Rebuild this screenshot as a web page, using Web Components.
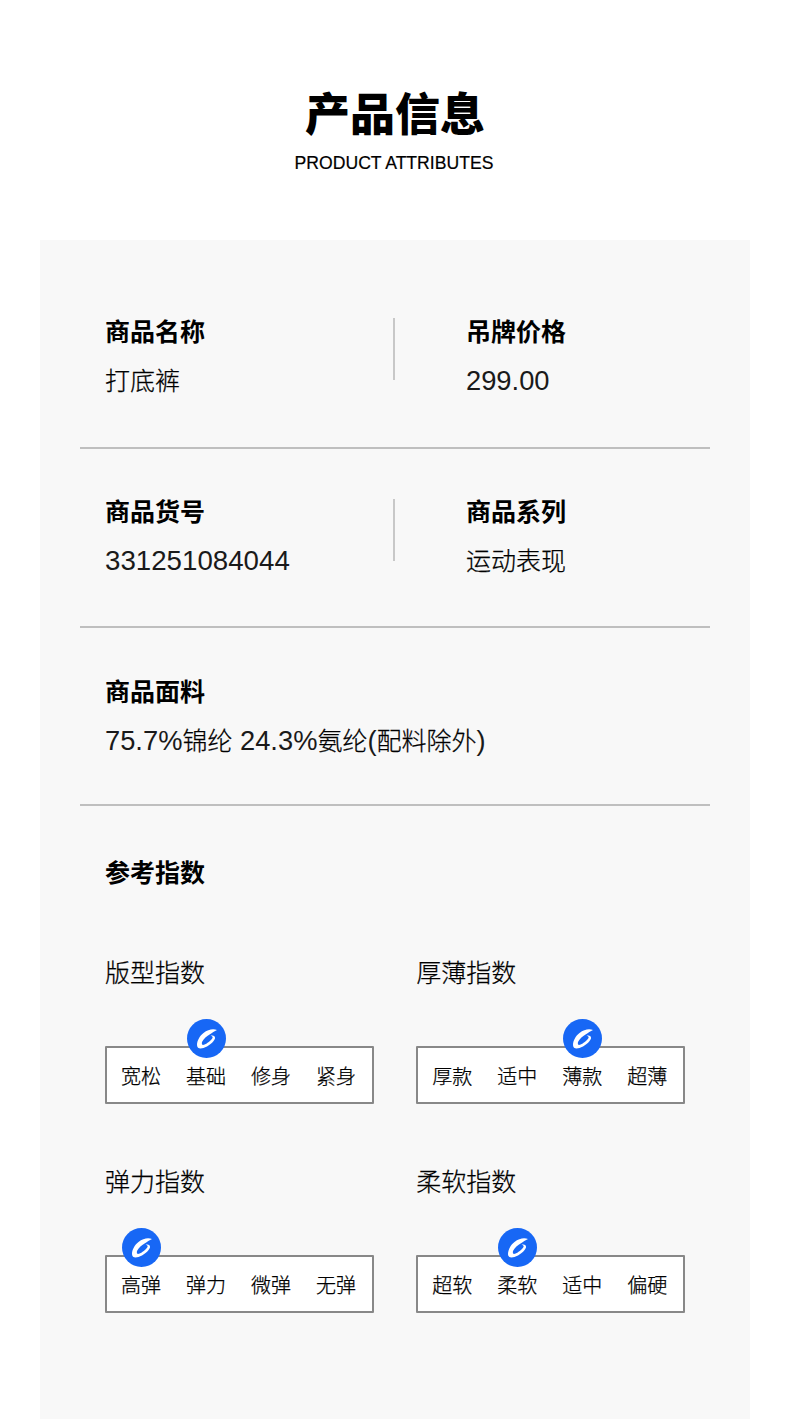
<!DOCTYPE html>
<html lang="zh">
<head>
<meta charset="utf-8">
<title>产品信息</title>
<style>
  html, body { margin: 0; padding: 0; background: #fff; }
  body {
    width: 790px;
    height: 1419px;
    overflow: hidden;
    font-family: "Liberation Sans", "Noto Sans CJK SC", sans-serif;
    color: #000;
  }
</style>
</head>
<body>
<product-attributes>
  <attr-row>
    <attr-item label="商品名称">打底裤</attr-item>
    <attr-item label="吊牌价格" side="right"><span class="latin mix">299.00</span></attr-item>
  </attr-row>
  <attr-row>
    <attr-item label="商品货号"><span class="latin">331251084044</span></attr-item>
    <attr-item label="商品系列" side="right">运动表现</attr-item>
  </attr-row>
  <attr-row>
    <attr-item label="商品面料"><span class="latin mix">75.7%</span>锦纶<span class="latin mix"> 24.3%</span>氨纶<span class="latin mix">(</span>配料除外<span class="latin mix">)</span></attr-item>
  </attr-row>
  <index-panel title="参考指数">
    <index-scale name="版型指数" options="宽松,基础,修身,紧身" active="1"></index-scale>
    <index-scale name="厚薄指数" options="厚款,适中,薄款,超薄" active="2"></index-scale>
    <index-scale name="弹力指数" options="高弹,弹力,微弹,无弹" active="0"></index-scale>
    <index-scale name="柔软指数" options="超软,柔软,适中,偏硬" active="1"></index-scale>
  </index-panel>
</product-attributes>

<script>
class ProductAttributes extends HTMLElement {
  constructor() {
    super();
    const shadow = this.attachShadow({ mode: 'open' });
    shadow.innerHTML = `
      <style>
        :host { display: block; }
        header { height: 240px; box-sizing: border-box; padding-top: 87px; text-align: center; }
        h1 { margin: 0; font-size: 45px; line-height: 58px; font-weight: 900; }
        p { margin: 0; font-size: 17.6px; line-height: 22px; padding-top: 7px; padding-right: 2px; -webkit-text-stroke: .2px #000; }
        .card { margin: 0 40px; height: 1179px; padding: 0 40px; background: #f8f8f8; box-sizing: border-box; }
      </style>
      <header><h1>产品信息</h1><p>PRODUCT ATTRIBUTES</p></header>
      <div class="card"><slot></slot></div>
    `;
  }
}

class AttrRow extends HTMLElement {
  constructor() {
    super();
    const shadow = this.attachShadow({ mode: 'open' });
    shadow.innerHTML = `
      <style>
        :host {
          --shift: -1px;
          display: flex;
          box-sizing: border-box;
          padding: 78px 25px 0;
          height: 209px;
          border-bottom: 2px solid #bfbfbf;
        }
        :host(:nth-of-type(2)) { --shift: -2px; padding-top: 50px; height: 179px; }
        :host(:nth-of-type(3)) { padding-top: 50px; height: 178px; }
      </style>
      <slot></slot>
    `;
  }
}

class AttrItem extends HTMLElement {
  constructor() {
    super();
    const shadow = this.attachShadow({ mode: 'open' });
    shadow.innerHTML = `
      <style>
        :host { display: block; width: 288px; height: 62px; font-size: 25px; line-height: 30px; font-weight: 300; white-space: nowrap; -webkit-text-stroke: .25px #000; }
        :host([side="right"]) { width: 290px; box-sizing: border-box; padding-left: 71px; border-left: 2px solid #c8c8c8; }
        .label { font-weight: 700; height: 30px; margin-top: var(--shift); margin-bottom: 19px; -webkit-text-stroke: 0; }
        ::slotted(.latin) { font-size: 27.7px; -webkit-text-stroke: 0; color: #1a1a1a; }
        ::slotted(.mix) { font-size: 27.3px; }
      </style>
      <div class="label"></div>
      <slot></slot>
    `;
    shadow.querySelector('.label').textContent = this.getAttribute('label');
  }
}

class IndexPanel extends HTMLElement {
  constructor() {
    super();
    const shadow = this.attachShadow({ mode: 'open' });
    shadow.innerHTML = `
      <style>
        :host { display: block; padding: 52px 25px 0; }
        h2 { margin: 0 0 70px; font-size: 25px; line-height: 30px; font-weight: 700; }
        .grid { display: grid; grid-template-columns: 268.75px 268.75px; column-gap: 42.5px; row-gap: 63px; }
      </style>
      <h2></h2>
      <div class="grid"><slot></slot></div>
    `;
    shadow.querySelector('h2').textContent = this.getAttribute('title');
  }
}

class IndexScale extends HTMLElement {
  constructor() {
    super();
    const shadow = this.attachShadow({ mode: 'open' });
    const options = this.getAttribute('options').split(',');
    const active = Number(this.getAttribute('active'));
    shadow.innerHTML = `
      <style>
        :host { display: block; -webkit-text-stroke: .25px #000; }
        .name { font-size: 25px; font-weight: 300; line-height: 30px; margin-bottom: 58px; }
        .box {
          display: grid;
          grid-template-columns: repeat(4, 65px);
          box-sizing: border-box;
          height: 58px;
          padding-left: 1.5px;
          background: #fff;
          border: 2px solid #888;
          border-radius: 1px;
        }
        .opt { position: relative; font-size: 20px; font-weight: 300; line-height: 56px; padding-top: 1px; height: 54px; text-align: center; white-space: nowrap; }
        svg { position: absolute; left: 50%; top: -29px; margin-left: -19px; width: 39px; height: 39px; }
      </style>
      <div class="name"></div>
      <div class="box">
        ${options.map((o, i) => `<div class="opt">${o}${i === active ? `
          <svg viewBox="0 0 39 39" aria-hidden="true">
            <circle cx="19.5" cy="19.5" r="19.5" fill="#1767f5"/>
            <path fill="#fff" stroke="none" d="M30 11C26 9.500 21 10.500 16.500 14 12.500 17 10 22 10 26 10 29.500 13 30 16.500 29 21 27.500 27 23 28 19.500 28.500 17 26 15.800 23.500 16.800 25 16.800 26 17.800 25.500 19 24 21.500 20 24.800 17 25.800 15.200 26.300 14.500 25.200 15 23 16.500 20 20 17 23 15.300 25 14 27.500 12 30 11Z"/>
          </svg>` : ''}</div>`).join('')}
      </div>
    `;
    shadow.querySelector('.name').textContent = this.getAttribute('name');
  }
}

customElements.define('product-attributes', ProductAttributes);
customElements.define('attr-row', AttrRow);
customElements.define('attr-item', AttrItem);
customElements.define('index-panel', IndexPanel);
customElements.define('index-scale', IndexScale);
</script>
</body>
</html>
